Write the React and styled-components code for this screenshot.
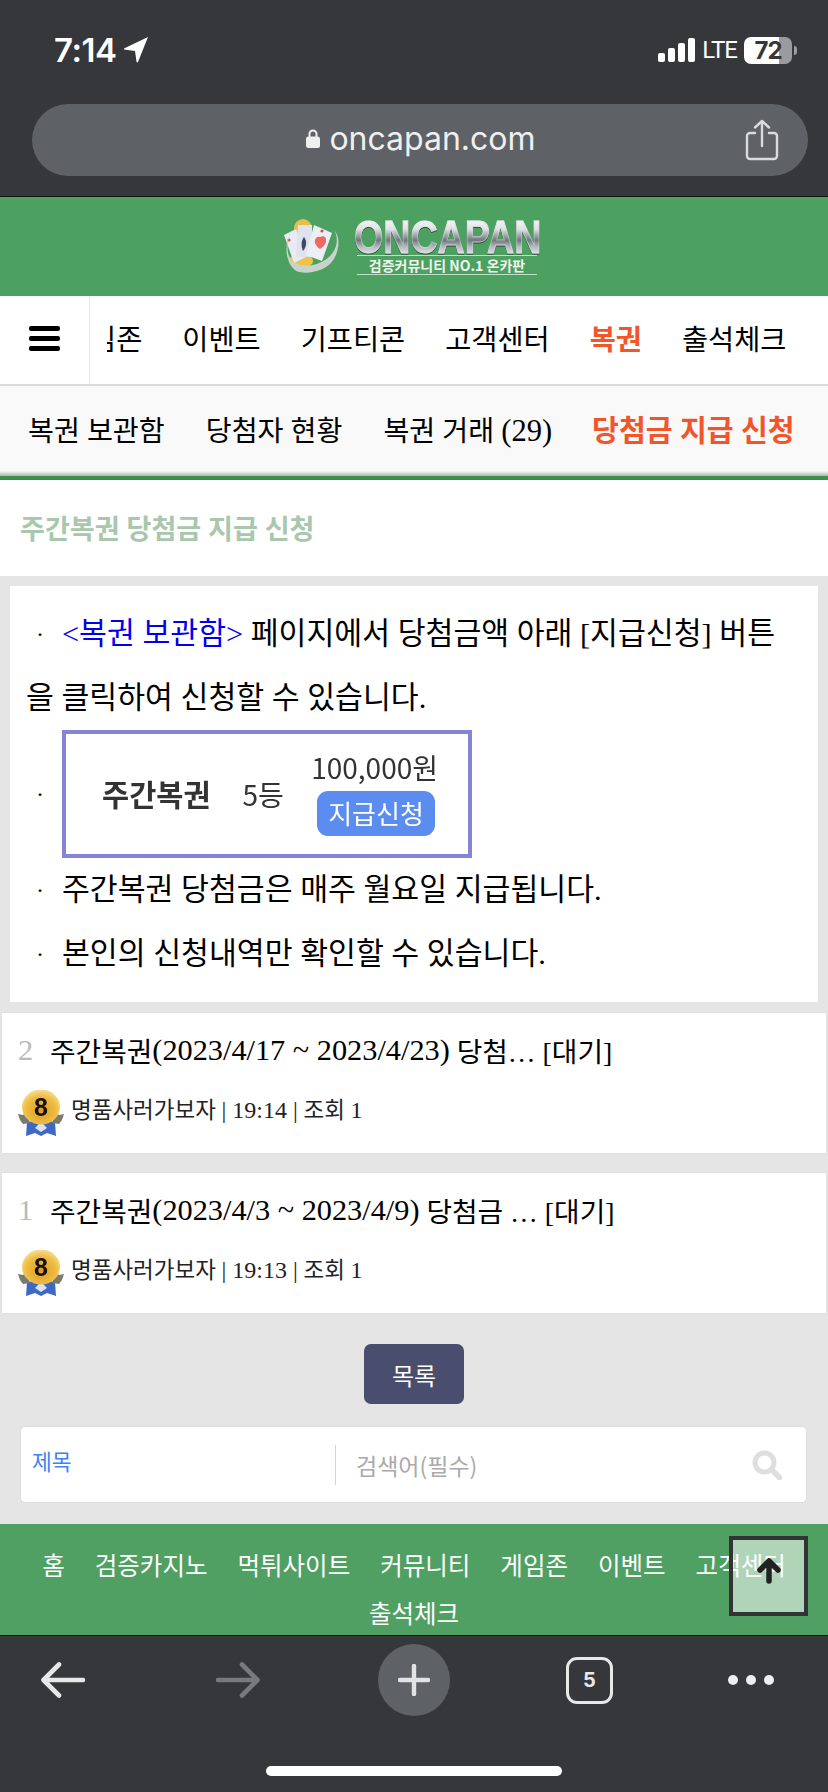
import React from 'react';
import styled, { createGlobalStyle } from 'styled-components';

const Global = createGlobalStyle`
  html, body { margin: 0; padding: 0; background: #e5e5e5; }
  * { box-sizing: border-box; }
`;

const SITE_FONT = `"Liberation Serif", "Noto Sans CJK KR", serif`;
const UI_FONT = `Inter, "Noto Sans", sans-serif`;

// Page
const Page = styled.div`
  position: relative;
  width: 828px;
  height: 1792px;
  display: flex;
  flex-direction: column;
  overflow: hidden;
  font-family: ${SITE_FONT};
  color: #000;
`;

// Safari top
const TopChrome = styled.div`
  height: 197px;
  background: #36373a;
  border-bottom: 1px solid #111;
  padding: 0 20px 0 32px;
`;
const StatusBar = styled.div`
  height: 104px;
  padding: 32px 11px 0 22px;
  display: flex;
  justify-content: space-between;
  align-items: flex-start;
  color: #fff;
  font-family: ${UI_FONT};
`;
const StatusGroup = styled.div`
  display: flex;
  align-items: center;
  height: 36px;
  gap: ${p => p.$gap || 8}px;
`;
const Time = styled.span`
  font-size: 33px;
  font-weight: 600;
  letter-spacing: -0.5px;
`;
const Lte = styled.span`
  font-family: Roboto, sans-serif;
  font-size: 24px;
  letter-spacing: -1px;
`;
const Battery = styled.div`
  width: 48px;
  height: 27px;
  border-radius: 7px;
  background: linear-gradient(90deg, #fff 0 73%, #9a9b9d 73% 100%);
  color: #36373a;
  font-size: 24px;
  font-weight: 700;
  letter-spacing: -1px;
  line-height: 27px;
  text-align: center;
`;
const BatteryNub = styled.div`
  width: 3px;
  height: 9px;
  margin-left: -5px;
  border-radius: 0 3px 3px 0;
  background: #9a9b9d;
`;
const UrlBar = styled.div`
  position: relative;
  height: 72px;
  border-radius: 36px;
  background: #5e6166;
  display: flex;
  align-items: center;
  justify-content: center;
  gap: 9px;
  color: #eef0f0;
  font-family: ${UI_FONT};
  font-size: 32px;
  padding: 0 0 4px 2px;
`;
const ShareIcon = styled.svg`
  position: absolute;
  right: 29px;
  top: 15px;
`;

// Logo
const Header = styled.div`
  height: 99px;
  background: #4ca060;
  display: flex;
  align-items: center;
  justify-content: center;
  gap: 10px;
  padding-right: 6px;
`;
const LogoWords = styled.div`
  width: 186px;
  display: flex;
  flex-direction: column;
  align-items: center;
`;
const LogoName = styled.div`
  align-self: flex-start;
  flex: none;
  width: 233px;
  height: 37px;
  font-family: "Liberation Sans", Arial, sans-serif;
  font-weight: 700;
  font-size: 47px;
  line-height: 37px;
  white-space: nowrap;
  transform: scaleX(0.8);
  transform-origin: left center;
  background: linear-gradient(180deg, #f8fafb 0%, #dfe3e6 30%, #70777d 60%, #b5babe 78%, #e6e9eb 100%);
  -webkit-background-clip: text;
  background-clip: text;
  color: transparent;
  -webkit-text-stroke: 1px rgba(225, 230, 233, 0.55);
  filter: drop-shadow(0 1px 0 #3c4a44);
`;
const LogoTag = styled.div`
  width: 180px;
  height: 20px;
  border-top: 1px solid #bfe0c8;
  border-bottom: 1px solid #bfe0c8;
  color: #eef5ef;
  font-family: "Noto Sans CJK KR", sans-serif;
  font-size: 14px;
  font-weight: 700;
  line-height: 18px;
  text-align: center;
  white-space: nowrap;
`;

// Menus
const NavRow = styled.div`
  height: 90px;
  display: flex;
  background: #fff;
  padding-left: 2px;
  border-bottom: 2px solid #dcdcdc;
`;
const MenuCell = styled.div`
  width: 88px;
  flex: none;
  border-right: 1px solid #e6e6e6;
  display: flex;
  align-items: center;
  justify-content: center;
  padding-right: 2px;
  padding-bottom: 4px;
`;
const BarsIcon = styled.div`
  width: 31px;
  display: flex;
  flex-direction: column;
  gap: 5px;
`;
const Bar = styled.span`
  display: block;
  height: 5px;
  border-radius: 2px;
  background: #000;
`;
const NavClip = styled.div`
  flex: 1;
  overflow: hidden;
  margin-left: 17px;
`;
const NavTrack = styled.div`
  display: flex;
  gap: 40px;
  height: 100%;
  align-items: center;
  margin-left: -43px;
  padding-bottom: 6px;
  white-space: nowrap;
`;
const NavItem = styled.span`
  flex: none;
  font-size: 28.4px;
  font-weight: ${p => (p.$on ? 700 : 400)};
  color: ${p => (p.$on ? '#f0562a' : '#000')};
`;
const SubNav = styled.div`
  height: 90px;
  background: linear-gradient(180deg, #f9f9f9 calc(100% - 5px), #a4bca9 100%);
  display: flex;
  align-items: center;
  padding: 0 0 6px 28px;
  white-space: nowrap;
`;
const SubItem = styled.span`
  margin-right: ${p => p.$gap}px;
  font-size: ${p => (p.$on ? 29.2 : 28.2)}px;
  font-weight: ${p => (p.$on ? 700 : 400)};
  color: ${p => (p.$on ? '#f0562a' : '#000')};
`;
const Latin = styled.span`
  font-size: ${p => p.$size}px;
`;
const GreenRule = styled.div`
  height: 4px;
  background: #43904f;
`;
const TitlePanel = styled.div`
  height: 96px;
  background: #fff;
  display: flex;
  align-items: center;
  padding: 0 0 2px 20px;
  font-size: 27.1px;
  font-weight: 700;
  color: #a9c7ad;
  box-shadow: 0 3px 6px rgba(0, 0, 0, 0.25);
`;

// Main
const Main = styled.div`
  flex: 1;
  background: #e5e5e5;
  display: flex;
  flex-direction: column;
`;
const Notice = styled.div`
  margin: 10px 10px 0;
  height: 416px;
  background: #fff;
  padding: 16px 16px 0;
  font-size: 30.3px;
  line-height: 64px;
`;
const Line = styled.div`
  display: flex;
  align-items: center;
  white-space: nowrap;
`;
const Bullet = styled.span`
  width: 36px;
  flex: none;
  text-align: center;
  padding-right: 8px;
  font-size: 24px;
`;
const Blue = styled.span`
  color: #0000ee;
`;
const ClaimImage = styled.div`
  width: 410px;
  height: 128px;
  border: 4px solid #8585d6;
  background: #fff;
  display: flex;
  align-items: center;
  padding: 0 33px 0 36px;
  font-family: "Noto Sans CJK KR", sans-serif;
  line-height: 1;
  color: #333;
`;
const ClaimName = styled.span`
  font-size: 29.5px;
  font-weight: 700;
  margin-right: 32px;
  filter: blur(0.4px);
`;
const ClaimRank = styled.span`
  font-size: 28px;
  flex: 1;
  filter: blur(0.4px);
`;
const ClaimRight = styled.div`
  display: flex;
  flex-direction: column;
  align-items: flex-end;
  gap: 10px;
  filter: blur(0.4px);
`;
const ClaimPrize = styled.span`
  font-size: 28px;
  margin-right: -3px;
`;
const ClaimButton = styled.span`
  width: 118px;
  height: 45px;
  border-radius: 11px;
  background: #5b8df0;
  color: #fff;
  font-size: 26px;
  line-height: 43px;
  text-align: center;
`;
const Post = styled.div`
  height: 140px;
  margin: ${p => p.$top}px 2px 0;
  background: #fff;
  padding: 0 16px;
  box-shadow: 0 0 2px #d8d8d8;
`;
const PostTitle = styled.div`
  height: 74px;
  display: flex;
  align-items: center;
  font-size: 27.8px;
  white-space: pre;
`;
const PostNum = styled.span`
  width: 32px;
  flex: none;
  color: #bbb;
  font-size: 30.4px;
`;
const PostMeta = styled.div`
  display: flex;
  align-items: center;
  gap: 7px;
  margin-top: -2px;
  font-size: 22.5px;
  color: #222;
  white-space: pre;
`;
const MedalIcon = styled.svg`
  margin: 5px 0 -5px;
  filter: blur(0.5px);
`;
const ListButton = styled.button`
  align-self: center;
  width: 100px;
  height: 60px;
  margin-top: 31px;
  border: 0;
  border-radius: 7px;
  background: #4a4e6e;
  color: #fff;
  font-family: "Noto Sans CJK KR", sans-serif;
  font-size: 24px;
`;
const SearchBox = styled.div`
  height: 77px;
  margin: 22px 21px 0 20px;
  padding: 0 24px 0 11px;
  background: #fff;
  border: 1px solid #dedede;
  border-radius: 5px;
  display: flex;
  align-items: center;
  font-family: "Noto Sans CJK KR", sans-serif;
`;
const SearchField = styled.span`
  width: 303px;
  flex: none;
  align-self: stretch;
  display: flex;
  align-items: center;
  padding-bottom: 8px;
  color: #3b82f6;
  font-size: 21.5px;
`;
const SearchInput = styled.input`
  flex: 1;
  min-width: 0;
  height: 40px;
  border: 0;
  border-left: 1px solid #d4d4d4;
  outline: 0;
  padding: 0 0 0 20px;
  font-family: inherit;
  font-size: 23px;
  &::placeholder { color: #aaa; opacity: 1; }
`;

// Site footer
const Footer = styled.div`
  height: 111px;
  background: #50a063;
  display: flex;
  flex-wrap: wrap;
  justify-content: center;
  align-content: flex-start;
  padding: 17px 30px 0;
  column-gap: 30px;
  font-family: "Noto Sans CJK KR", sans-serif;
  font-size: 24.5px;
  line-height: 48px;
  color: #fff;
`;
const TopButton = styled.div`
  position: absolute;
  left: 729px;
  top: 1536px;
  width: 79px;
  height: 80px;
  border: 4px solid #333;
  background: rgba(255, 255, 255, 0.55);
  display: flex;
  align-items: center;
  justify-content: center;
  padding-bottom: 11px;
`;

// Safari bottom
const BottomChrome = styled.div`
  height: 157px;
  background: #36373a;
  border-top: 1px solid #111;
  display: flex;
  flex-direction: column;
  align-items: center;
`;
const ToolRow = styled.div`
  width: 100%;
  height: 130px;
  padding: 8px 0 0 41px;
  display: flex;
  align-items: flex-start;
`;
const ToolSlot = styled.div`
  height: 72px;
  margin-left: ${p => p.$left || 0}px;
  display: flex;
  align-items: center;
  justify-content: center;
`;
const PlusCircle = styled.div`
  width: 72px;
  height: 72px;
  border-radius: 50%;
  background: #5e6166;
  display: flex;
  align-items: center;
  justify-content: center;
`;
const TabCount = styled.div`
  width: 47px;
  height: 47px;
  border: 3px solid #e8e8e8;
  border-radius: 11px;
  color: #e8e8e8;
  font-family: ${UI_FONT};
  font-size: 20px;
  font-weight: 700;
  line-height: 41px;
  text-align: center;
`;
const Dots = styled.div`
  display: flex;
  gap: 8px;
`;
const Dot = styled.span`
  width: 10px;
  height: 10px;
  border-radius: 50%;
  background: #eee;
`;
const HomeBar = styled.div`
  width: 296px;
  height: 10px;
  border-radius: 5px;
  background: #fff;
`;

const LocationArrow = () => (
  <svg width="24" height="26" viewBox="0 0 24 26">
    <path d="M24 0 L14 25 Q13 26 12.5 24.5 L11 14 L0 12.5 Q-0.5 11.5 1 11 Z" fill="#fff" />
  </svg>
);

const Signal = () => (
  <svg width="37" height="24" viewBox="0 0 37 24" fill="#fff">
    <rect x="0" y="15" width="7" height="9" rx="2" />
    <rect x="10" y="10" width="7" height="14" rx="2" />
    <rect x="20" y="5" width="7" height="19" rx="2" />
    <rect x="30" y="0" width="7" height="24" rx="2" />
  </svg>
);

const Lock = () => (
  <svg width="14" height="19" viewBox="0 0 14 19">
    <path d="M3.5 8V5a3.5 3.5 0 0 1 7 0v3" fill="none" stroke="#eef0f0" strokeWidth="2" />
    <rect x="0" y="7.5" width="14" height="11.5" rx="2.5" fill="#eef0f0" />
  </svg>
);

const Share = () => (
  <ShareIcon width="34" height="42" viewBox="0 0 34 42" fill="none" stroke="#d8dadb" strokeWidth="2.4" strokeLinecap="round" strokeLinejoin="round">
    <path d="M10 14H5a3 3 0 0 0-3 3v20a3 3 0 0 0 3 3h24a3 3 0 0 0 3-3V17a3 3 0 0 0-3-3h-5" />
    <path d="M17 27V2M10 8.5L17 2l7 6.5" />
  </ShareIcon>
);

const LogoCards = () => (
  <svg width="62" height="56" viewBox="0 0 62 56">
    <circle cx="21" cy="9" r="9" fill="#e8bd4a" />
    <ellipse cx="19" cy="42" rx="12" ry="7" fill="#eec447" />
    <path d="M2 16L14 10L24 38L12 44Z" fill="#e8ebf3" />
    <path d="M16 6L30 6L30 38L14 38Z" fill="#dfe3ef" />
    <path d="M32 6L50 14L40 42L24 36Z" fill="#eceff6" />
    <path d="M22 18c3 4 3 9-1 14c-2-5-2-10 1-14Z" fill="#3d4a66" />
    <path d="M38 18c3-2 7 0 6 4c0 3-3 6-6 8c-3-2-6-6-5-9c1-3 3-4 5-3Z" fill="#ec6a62" />
    <circle cx="7" cy="21" r="1.6" fill="#d8504a" />
    <circle cx="40" cy="12" r="1.6" fill="#d8504a" />
    <path d="M10 10C2 24 2 42 14 52c10 4 30 1 38-12c5-9 7-22 0-29c5 8 3 19-4 26C38 47 20 50 10 42C4 35 4 22 10 10Z" fill="#c9d3cc" />
  </svg>
);

const Medal = () => (
  <MedalIcon width="46" height="46" viewBox="0 0 46 46">
    <defs>
      <radialGradient id="gold" cx="50%" cy="60%" r="62%">
        <stop offset="0%" stopColor="#dd9a22" />
        <stop offset="65%" stopColor="#efbd42" />
        <stop offset="100%" stopColor="#f8e29a" />
      </radialGradient>
    </defs>
    <path d="M9 32L23 30L37 32L38 46L29 43L23 46L17 43L8 46Z" fill="#3f69c4" />
    <path d="M17 38l6-6l6 6l-6 4Z" fill="#dbe4f4" />
    <path d="M0 24l5 1l2-2l3 4l2 6l-7 1l-3-4ZM46 24l-5 1l-2-2l-3 4l-2 6l7 1l3-4Z" fill="#7b7a70" />
    <ellipse cx="23" cy="17" rx="19" ry="17.5" fill="url(#gold)" />
    <text x="23" y="26" textAnchor="middle" fontFamily="Liberation Sans, sans-serif" fontWeight="700" fontSize="25" fill="#14110a">8</text>
  </MedalIcon>
);

const SearchGlyph = () => (
  <svg width="30" height="30" viewBox="0 0 30 30" fill="none" stroke="#dedede" strokeLinecap="round">
    <circle cx="12.5" cy="12.5" r="9.5" strokeWidth="5" />
    <path d="M20 20l7.5 7.5" strokeWidth="5.5" />
  </svg>
);

const UpArrow = () => (
  <svg width="26" height="26" viewBox="0 0 26 26" fill="none" stroke="#222" strokeWidth="5.5" strokeLinecap="round" strokeLinejoin="round">
    <path d="M13 23V4M4 12l9-9 9 9" />
  </svg>
);

const ArrowIcon = ({ flip, color }) => (
  <svg width="44" height="36" viewBox="0 0 44 36" fill="none" stroke={color} strokeWidth="4.6" strokeLinecap="round" strokeLinejoin="round"
    style={flip ? { transform: 'scaleX(-1)' } : undefined}>
    <path d="M42 18H4M18 2.5L2.5 18 18 33.5" />
  </svg>
);

const PlusIcon = () => (
  <svg width="32" height="32" viewBox="0 0 32 32" stroke="#e2e3e4" strokeWidth="4.4" strokeLinecap="round">
    <path d="M16 2v28M2 16h28" />
  </svg>
);

const navItems = ['게임존', '이벤트', '기프티콘', '고객센터', '복권', '출석체크'];
const footerItems = ['홈', '검증카지노', '먹튀사이트', '커뮤니티', '게임존', '이벤트', '고객센터', '출석체크'];
const posts = [
  { num: 2, range: '(2023/4/17 ~ 2023/4/23)', rest: ' 당첨… [대기]', time: '19:14', top: 11 },
  { num: 1, range: '(2023/4/3 ~ 2023/4/9)', rest: ' 당첨금 … [대기]', time: '19:13', top: 20 },
];

export default function App() {
  return (
    <Page>
      <Global />

      <TopChrome>
        <StatusBar>
          <StatusGroup>
            <Time>7:14</Time>
            <LocationArrow />
          </StatusGroup>
          <StatusGroup $gap={7}>
            <Signal />
            <Lte>LTE</Lte>
            <Battery>72</Battery>
            <BatteryNub />
          </StatusGroup>
        </StatusBar>
        <UrlBar>
          <Lock />
          oncapan.com
          <Share />
        </UrlBar>
      </TopChrome>

      <Header>
        <LogoCards />
        <LogoWords>
          <LogoName>ONCAPAN</LogoName>
          <LogoTag>검증커뮤니티 NO.1 온카판</LogoTag>
        </LogoWords>
      </Header>

      <NavRow>
        <MenuCell>
          <BarsIcon>
            <Bar />
            <Bar />
            <Bar />
          </BarsIcon>
        </MenuCell>
        <NavClip>
          <NavTrack>
            {navItems.map(item => (
              <NavItem key={item} $on={item === '복권'}>{item}</NavItem>
            ))}
          </NavTrack>
        </NavClip>
      </NavRow>

      <SubNav>
        <SubItem $gap={41}>복권 보관함</SubItem>
        <SubItem $gap={41}>당첨자 현황</SubItem>
        <SubItem $gap={40}>복권 거래 <Latin $size={30.5}>(29)</Latin></SubItem>
        <SubItem $on>당첨금 지급 신청</SubItem>
      </SubNav>
      <GreenRule />

      <TitlePanel>주간복권 당첨금 지급 신청</TitlePanel>

      <Main>
        <Notice>
          <Line>
            <Bullet>·</Bullet>
            <span><Blue>&lt;복권 보관함&gt;</Blue> 페이지에서 당첨금액 아래 [지급신청] 버튼</span>
          </Line>
          <Line>을 클릭하여 신청할 수 있습니다.</Line>
          <Line>
            <Bullet>·</Bullet>
            <ClaimImage>
              <ClaimName>주간복권</ClaimName>
              <ClaimRank>5등</ClaimRank>
              <ClaimRight>
                <ClaimPrize>100,000원</ClaimPrize>
                <ClaimButton>지급신청</ClaimButton>
              </ClaimRight>
            </ClaimImage>
          </Line>
          <Line>
            <Bullet>·</Bullet>
            주간복권 당첨금은 매주 월요일 지급됩니다.
          </Line>
          <Line>
            <Bullet>·</Bullet>
            본인의 신청내역만 확인할 수 있습니다.
          </Line>
        </Notice>

        {posts.map(post => (
          <Post key={post.num} $top={post.top}>
            <PostTitle>
              <PostNum>{post.num}</PostNum>
              주간복권<Latin $size={30.3}>{post.range}</Latin>{post.rest}
            </PostTitle>
            <PostMeta>
              <Medal />
              <span>명품사러가보자 <Latin $size={24}>| {post.time} |</Latin> 조회 <Latin $size={24}>1</Latin></span>
            </PostMeta>
          </Post>
        ))}

        <ListButton>목록</ListButton>

        <SearchBox>
          <SearchField>제목</SearchField>
          <SearchInput placeholder="검색어(필수)" readOnly />
          <SearchGlyph />
        </SearchBox>
      </Main>

      <Footer>
        {footerItems.map(item => (
          <span key={item}>{item}</span>
        ))}
      </Footer>
      <TopButton>
        <UpArrow />
      </TopButton>

      <BottomChrome>
        <ToolRow>
          <ToolSlot><ArrowIcon color="#e8e8e8" /></ToolSlot>
          <ToolSlot $left={131}><ArrowIcon flip color="#77797c" /></ToolSlot>
          <ToolSlot $left={118}><PlusCircle><PlusIcon /></PlusCircle></ToolSlot>
          <ToolSlot $left={116}><TabCount>5</TabCount></ToolSlot>
          <ToolSlot $left={115}>
            <Dots>
              <Dot />
              <Dot />
              <Dot />
            </Dots>
          </ToolSlot>
        </ToolRow>
        <HomeBar />
      </BottomChrome>
    </Page>
  );
}
